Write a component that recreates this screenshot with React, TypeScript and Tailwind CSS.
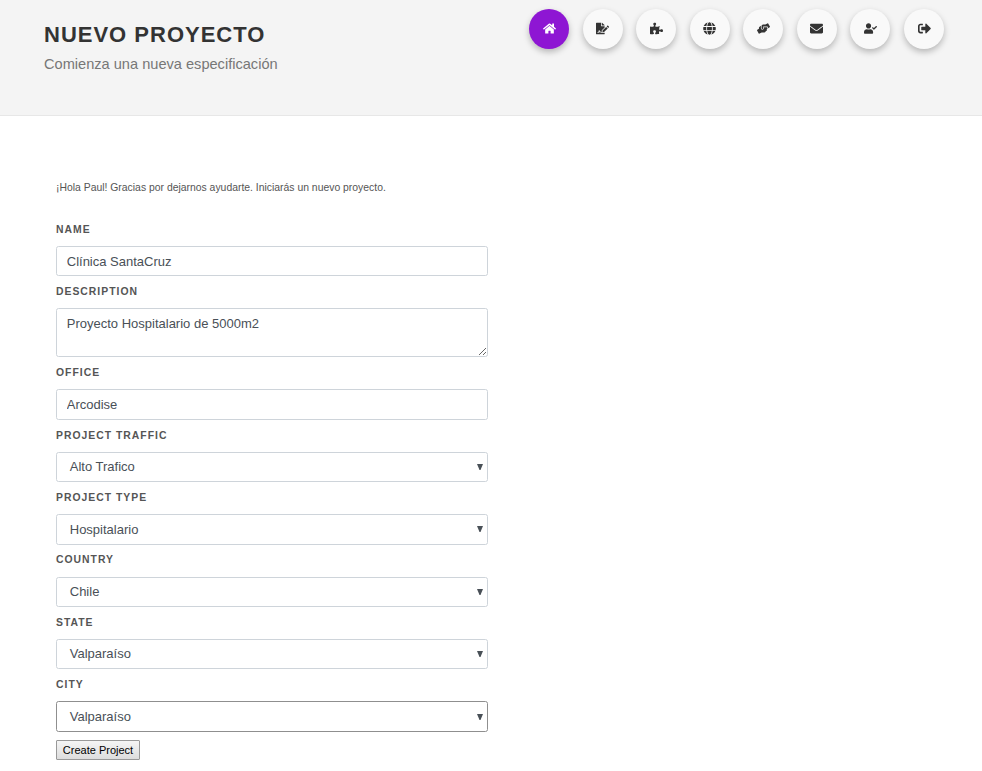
import { useState } from 'react';
import type { IconType } from 'react-icons';
import {
  FaHome,
  FaFileSignature,
  FaPuzzlePiece,
  FaGlobe,
  FaHandsHelping,
  FaEnvelope,
  FaUserCheck,
  FaSignOutAlt,
} from 'react-icons/fa';

const navItems: { label: string; Icon: IconType; active?: boolean }[] = [
  { label: 'Inicio', Icon: FaHome, active: true },
  { label: 'Especificaciones', Icon: FaFileSignature },
  { label: 'Productos', Icon: FaPuzzlePiece },
  { label: 'Red', Icon: FaGlobe },
  { label: 'Ayuda', Icon: FaHandsHelping },
  { label: 'Mensajes', Icon: FaEnvelope },
  { label: 'Perfil', Icon: FaUserCheck },
  { label: 'Salir', Icon: FaSignOutAlt },
];

const control =
  'block w-full rounded-[2.5px] border border-[#ced4da] bg-white text-[13px] text-[#495057] outline-none';

function Label({ children }: { children: string }) {
  return (
    <label className="flex h-8 items-center text-[10.4px] font-bold uppercase leading-none tracking-[1px] text-[#555]">
      {children}
    </label>
  );
}

function TextField({ label, initial }: { label: string; initial: string }) {
  const [value, setValue] = useState(initial);
  return (
    <div>
      <Label>{label}</Label>
      <input
        className={`${control} h-[30.4px] px-[9.75px]`}
        value={value}
        onChange={(e) => setValue(e.target.value)}
      />
    </div>
  );
}

function SelectField({ label, value, focused }: { label: string; value: string; focused?: boolean }) {
  return (
    <div>
      <Label>{label}</Label>
      <div
        className={`flex h-[30.4px] w-full items-center justify-between rounded-[2.5px] border bg-white pl-[12.75px] pr-[4px] text-[13px] text-[#495057] ${
          focused ? 'border-[#8f8f8f]' : 'border-[#ced4da]'
        }`}
      >
        <span>{value}</span>
        <svg className="h-[6px] w-[6px]" viewBox="0 0 6 6" fill="#495057">
          <path d="M0 0h6L3.5 6h-1z" />
        </svg>
      </div>
    </div>
  );
}

export default function App() {
  return (
    <div className="h-[771px] overflow-hidden bg-white font-['Liberation_Sans',Arial,sans-serif]">
      <header className="flex h-[116px] justify-between border-b border-[#e7e7e7] bg-[#f4f4f4] pl-[44px] pr-[38px]">
        <div className="pt-[21px]">
          <h1 className="text-[22px] font-bold leading-[28px] tracking-[1px] text-[#333]">NUEVO PROYECTO</h1>
          <p className="mt-[5px] text-[14.6px] leading-[20px] text-[#777]">Comienza una nueva especificación</p>
        </div>
        <nav className="flex gap-[13.57px] pt-[9px]">
          {navItems.map(({ label, Icon, active }) => (
            <button
              key={label}
              aria-label={label}
              className={`flex h-10 w-10 items-center justify-center rounded-full pb-[2px] text-[13px] shadow-[0_3px_6px_rgba(0,0,0,0.25)] ${
                active ? 'bg-[#8e16d3] text-white' : 'bg-[#f9f9f9] text-[#333]'
              }`}
            >
              <Icon />
            </button>
          ))}
        </nav>
      </header>
      <main className="w-[488px] pl-[56px] pt-[64px]">
        <p className="text-[10.4px] leading-[16px] text-[#555]">
          ¡Hola Paul! Gracias por dejarnos ayudarte. Iniciarás un nuevo proyecto.
        </p>
        <form className="mt-[18px]" onSubmit={(e) => e.preventDefault()}>
          <TextField label="Name" initial="Clínica SantaCruz" />
          <Label>Description</Label>
          <textarea
            className={`${control} h-[49px] resize-y overflow-hidden px-[9.75px] py-[5px] leading-[19.5px]`}
            defaultValue="Proyecto Hospitalario de 5000m2"
          />
          <TextField label="Office" initial="Arcodise" />
          <SelectField label="Project Traffic" value="Alto Trafico" />
          <SelectField label="Project Type" value="Hospitalario" />
          <SelectField label="Country" value="Chile" />
          <SelectField label="State" value="Valparaíso" />
          <SelectField label="City" value="Valparaíso" focused />
          <button className="mt-[8.2px] flex h-5 w-[84px] items-center justify-center whitespace-nowrap rounded-[1px] border border-[#999] bg-linear-to-b from-[#f5f5f5] to-[#dddddd] text-[11px] text-black">
            Create Project
          </button>
        </form>
      </main>
    </div>
  );
}
